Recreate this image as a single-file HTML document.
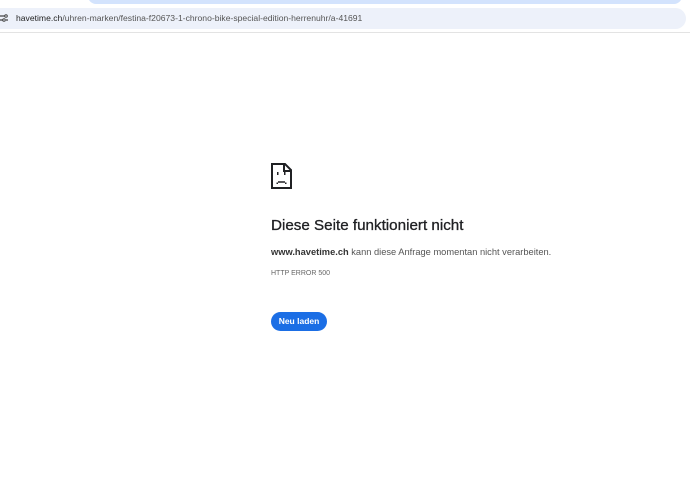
<!DOCTYPE html>
<html><head><style>
body{margin:0;width:690px;height:497px;background:#fff;position:relative;overflow:hidden;font-family:"Liberation Sans",sans-serif;}
.tab{position:absolute;left:88px;top:-6px;width:594px;height:10px;background:#d3e3fd;border-radius:0 0 8px 8px;}
.bar{position:absolute;left:-10px;top:8px;width:696px;height:21px;background:#edf1fa;border-radius:11px;}
.url{position:absolute;left:16px;top:13px;font-size:8.6px;color:#555;white-space:nowrap;}
.url b{font-weight:normal;color:#1f1f1f}
.line{position:absolute;left:0;top:32px;width:690px;height:1px;background:#e3e3e3;}
h1{position:absolute;left:271px;top:217px;margin:0;font-size:15.2px;font-weight:normal;color:#202124;-webkit-text-stroke:0.3px #202124;}
.p{position:absolute;left:271px;top:247px;font-size:9.3px;color:#555;}
.p b{color:#333}
.err{position:absolute;left:271px;top:270px;font-size:7px;color:#666;}
.btn{position:absolute;left:271px;top:312px;width:56px;height:19px;background:#1b6ee5;border-radius:10px;color:#fff;font-size:8.5px;text-align:center;line-height:19px;font-weight:bold;}
</style></head><body>
<div class="tab"></div>
<div class="bar"></div>
<svg style="position:absolute;left:0;top:14px" width="8" height="9"><path d="M0 2h5M0 6h3M6 6h2" stroke="#444" stroke-width="1.2"/><circle cx="6" cy="2" r="1.3" fill="none" stroke="#444"/><circle cx="4" cy="6" r="1.3" fill="none" stroke="#444"/></svg>
<div class="url"><b>havetime.ch</b>/uhren-marken/festina-f20673-1-chrono-bike-special-edition-herrenuhr/a-41691</div>
<div class="line"></div>
<svg style="position:absolute;left:271px;top:163px" width="22" height="26"><path d="M1 1h13l6 6v18H1z" fill="none" stroke="#202124" stroke-width="2"/><path d="M13 1v7h7" fill="none" stroke="#202124" stroke-width="2"/><rect x="6" y="9" width="1.5" height="3" fill="#202124"/><rect x="13" y="9" width="1.5" height="3" fill="#202124"/><path d="M7 19h7" stroke="#202124" stroke-width="1.5"/><rect x="5.5" y="19.5" width="1.5" height="1.5" fill="#202124"/><rect x="14" y="19.5" width="1.5" height="1.5" fill="#202124"/></svg>
<h1>Diese Seite funktioniert nicht</h1>
<div class="p"><b>www.havetime.ch</b> kann diese Anfrage momentan nicht verarbeiten.</div>
<div class="err">HTTP ERROR 500</div>
<div class="btn">Neu laden</div>
</body></html>
